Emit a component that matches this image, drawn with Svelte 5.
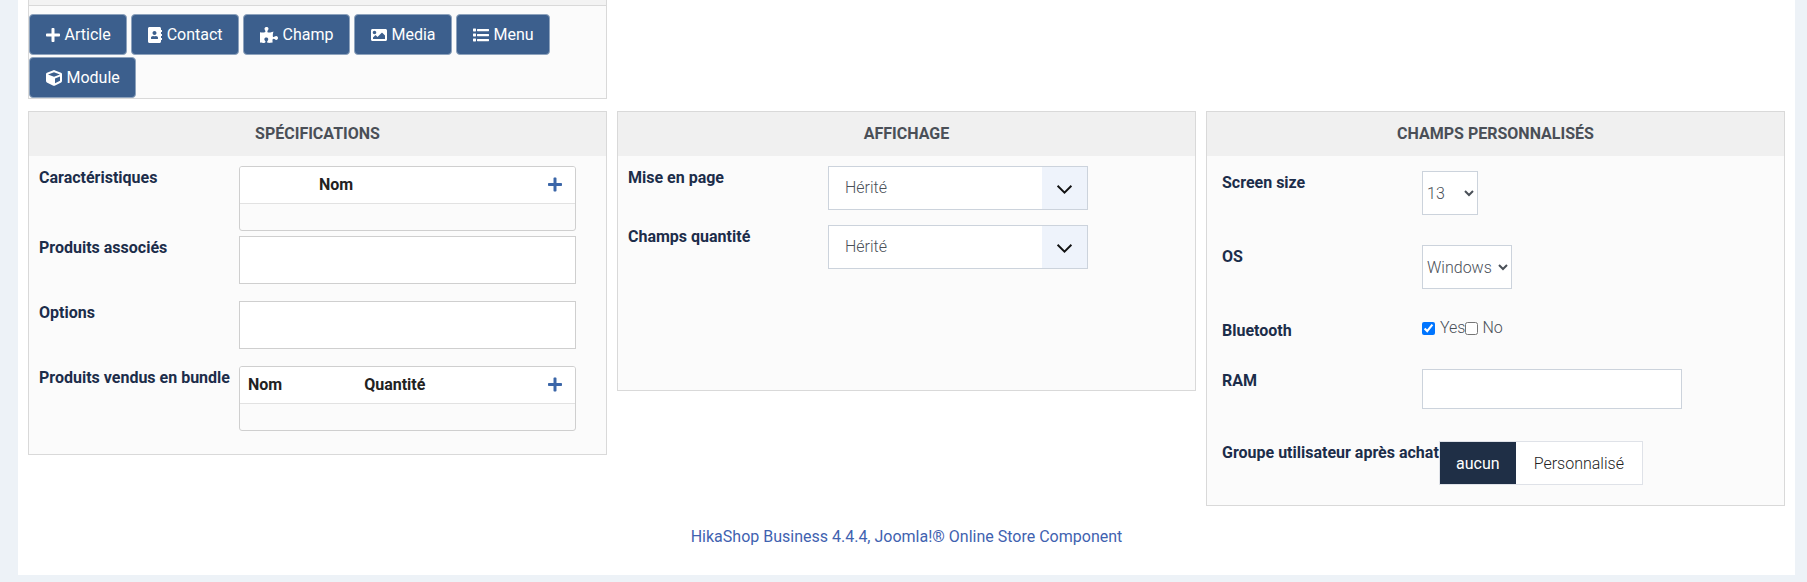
<script>
    // Boutons d'insertion du haut, icônes dessinées en SVG
    const boutons = [
        { nom: 'Article', vb: '0 0 448 512', d: 'M416 208H272V64c0-17.67-14.33-32-32-32h-32c-17.67 0-32 14.33-32 32v144H32c-17.67 0-32 14.33-32 32v32c0 17.67 14.33 32 32 32h144v144c0 17.67 14.33 32 32 32h32c17.67 0 32-14.33 32-32V304h144c17.67 0 32-14.33 32-32v-32c0-17.67-14.33-32-32-32z' },
        { nom: 'Contact', vb: '0 0 448 512', d: 'M436 160c6.6 0 12-5.4 12-12v-40c0-6.6-5.4-12-12-12h-20V48c0-26.5-21.5-48-48-48H48C21.5 0 0 21.5 0 48v416c0 26.5 21.5 48 48 48h320c26.5 0 48-21.5 48-48v-48h20c6.6 0 12-5.4 12-12v-40c0-6.6-5.4-12-12-12h-20v-64h20c6.6 0 12-5.4 12-12v-40c0-6.6-5.4-12-12-12h-20v-64h20zm-228-32c35.3 0 64 28.7 64 64s-28.7 64-64 64-64-28.7-64-64 28.7-64 64-64zm112 236.8c0 10.6-10 19.2-22.4 19.2H118.4C106 384 96 375.4 96 364.8v-19.2c0-31.8 30.1-57.6 67.2-57.6h5c12.3 5.1 25.7 8 39.8 8s27.6-2.9 39.8-8h5c37.1 0 67.2 25.8 67.2 57.6v19.2z' },
        { nom: 'Champ', vb: '0 0 576 512', d: 'M519.442 288.651c-41.519 0-59.5 31.593-82.058 31.593C377.409 320.244 432 144 432 144s-196.288 80-196.288-3.297c0-35.827 36.288-46.25 36.288-85.985C272 19.216 243.885 0 210.539 0c-34.654 0-66.366 18.891-66.366 56.346 0 41.364 31.711 59.277 31.711 81.75C175.885 207.719 0 166.758 0 166.758v333.237s178.635 41.047 178.635-28.662c0-22.473-40-40.107-40-81.471 0-37.456 29.25-56.346 63.577-56.346 33.673 0 61.788 19.216 61.788 54.717 0 39.735-36.288 50.158-36.288 85.985 0 60.803 129.675 25.73 181.23 25.73 0 0-34.725-120.101 25.827-120.101 35.962 0 46.423 36.152 86.308 36.152C556.712 416 576 387.99 576 354.443c0-34.199-18.962-65.792-56.558-65.792z' },
        { nom: 'Media', vb: '0 0 512 512', d: 'M464 448H48c-26.51 0-48-21.49-48-48V112c0-26.51 21.49-48 48-48h416c26.51 0 48 21.49 48 48v288c0 26.51-21.49 48-48 48zM112 120c-30.928 0-56 25.072-56 56s25.072 56 56 56 56-25.072 56-56-25.072-56-56-56zM64 384h384V272l-87.515-87.515c-4.686-4.686-12.284-4.686-16.971 0L208 320l-55.515-55.515c-4.686-4.686-12.284-4.686-16.971 0L64 336v48z' },
        { nom: 'Menu', vb: '0 0 512 512', d: 'M128 116V76c0-8.837 7.163-16 16-16h352c8.837 0 16 7.163 16 16v40c0 8.837-7.163 16-16 16H144c-8.837 0-16-7.163-16-16zm16 176h352c8.837 0 16-7.163 16-16v-40c0-8.837-7.163-16-16-16H144c-8.837 0-16 7.163-16 16v40c0 8.837 7.163 16 16 16zm0 160h352c8.837 0 16-7.163 16-16v-40c0-8.837-7.163-16-16-16H144c-8.837 0-16 7.163-16 16v40c0 8.837 7.163 16 16 16zM16 144h64c8.837 0 16-7.163 16-16V64c0-8.837-7.163-16-16-16H16C7.163 48 0 55.163 0 64v64c0 8.837 7.163 16 16 16zm0 160h64c8.837 0 16-7.163 16-16v-64c0-8.837-7.163-16-16-16H16c-8.837 0-16 7.163-16 16v64c0 8.837 7.163 16 16 16zm0 160h64c8.837 0 16-7.163 16-16v-64c0-8.837-7.163-16-16-16H16c-8.837 0-16 7.163-16 16v64c0 8.837 7.163 16 16 16z' },
        { nom: 'Module', vb: '0 0 512 512', d: 'M239.1 6.3l-208 78c-18.7 7-31.1 25-31.1 45v225.1c0 18.2 10.3 34.8 26.5 42.9l208 104c13.5 6.8 29.4 6.8 42.9 0l208-104c16.3-8.1 26.5-24.8 26.5-42.9V129.3c0-20-12.4-37.9-31.1-44.9l-208-78C262 2.2 250 2.2 239.1 6.3zM256 68.4l192 72v1.1l-192 78-192-78v-1.1l192-72zm32 356V275.5l160-65v133.9l-160 80z' }
    ];
    const plus = boutons[0];
    const affichage = ['Mise en page', 'Champs quantité'];
</script>

<div class="page">
    <div class="panel top">
        <div class="top-head"></div>
        <div class="actions">
            {#each boutons as b}
                <button type="button" class="btn">
                    <svg viewBox={b.vb} class="ico"><path d={b.d} /></svg>{b.nom}
                </button>
            {/each}
        </div>
    </div>

    <div class="panel spec">
        <h3>Spécifications</h3>
        <div class="row r1">
            <div class="lbl">Caractéristiques</div>
            <div class="tbl">
                <div class="tbl-head">
                    <span class="th-nom-seul">Nom</span>
                    <svg viewBox={plus.vb} class="add"><path d={plus.d} /></svg>
                </div>
                <div class="tbl-body"></div>
            </div>
        </div>
        <div class="row r2">
            <div class="lbl">Produits associés</div>
            <div class="box"></div>
        </div>
        <div class="row r2">
            <div class="lbl">Options</div>
            <div class="box"></div>
        </div>
        <div class="row">
            <div class="lbl">Produits vendus en bundle</div>
            <div class="tbl">
                <div class="tbl-head">
                    <span class="th-nom">Nom</span>
                    <span class="th-qte">Quantité</span>
                    <svg viewBox={plus.vb} class="add"><path d={plus.d} /></svg>
                </div>
                <div class="tbl-body"></div>
            </div>
        </div>
    </div>

    <div class="panel aff">
        <h3>Affichage</h3>
        {#each affichage as nom}
            <div class="row aff-row">
                <div class="lbl">{nom}</div>
                <div class="sel">
                    <span class="sel-val">Hérité</span>
                    <span class="sel-arrow">
                        <svg viewBox="0 0 16 10" width="17" height="11"><path d="M1.5 1.5 8 8l6.5-6.5" fill="none" stroke="#111" stroke-width="1.8" /></svg>
                    </span>
                </div>
            </div>
        {/each}
    </div>

    <div class="panel perso">
        <h3>Champs personnalisés</h3>
        <div class="row p-row">
            <div class="lbl">Screen size</div>
            <select class="native s13"><option>13</option></select>
        </div>
        <div class="row p-row">
            <div class="lbl">OS</div>
            <select class="native sos"><option>Windows</option></select>
        </div>
        <div class="row p-bt">
            <div class="lbl">Bluetooth</div>
            <div class="checks">
                <input type="checkbox" checked /><span class="chk-l">Yes</span><input type="checkbox" /><span class="chk-l last">No</span>
            </div>
        </div>
        <div class="row p-ram">
            <div class="lbl">RAM</div>
            <input type="text" class="ram" />
        </div>
        <div class="row">
            <div class="lbl grp">Groupe utilisateur après achat</div>
            <div class="toggle">
                <span class="on">aucun</span><span class="off">Personnalisé</span>
            </div>
        </div>
    </div>

    <div class="footer">HikaShop Business 4.4.4, Joomla!® Online Store Component</div>
</div>

<style>
    :global(body) {
        margin: 0;
        background: #edf2f7;
        font-family: Roboto, sans-serif;
    }

    .page {
        display: grid;
        grid-template-columns: repeat(3, 579px);
        column-gap: 10px;
        align-items: start;
        align-content: start;
        box-sizing: border-box;
        width: 1777px;
        height: 575px;
        margin-left: 18px;
        padding-left: 10px;
        background: #fff;
    }

    .panel {
        box-sizing: border-box;
        border: 1px solid #d9d9d9;
        background: #fbfbfb;
    }

    .top {
        grid-column: 1;
        height: 99px;
        border-top: 0;
        margin-bottom: 12px;
    }

    .spec {
        grid-column: 1;
        grid-row: 2;
        height: 344px;
    }

    .aff {
        grid-column: 2;
        grid-row: 2;
        height: 280px;
    }

    .perso {
        grid-column: 3;
        grid-row: 2;
        height: 395px;
    }

    .top-head {
        height: 5px;
        background: #f3f3f3;
        border-bottom: 1px solid #d9d9d9;
    }

    .actions {
        display: flex;
        flex-wrap: wrap;
        gap: 2px 4px;
        padding: 8px 0 0 0;
    }

    .btn {
        display: flex;
        align-items: center;
        height: 41px;
        padding: 0 15.5px;
        border: 1px solid #8ea3bd;
        border-radius: 4px;
        background: #3c5f8d;
        color: #fff;
        font: 400 16px Roboto, sans-serif;
    }

    .ico {
        height: 16px;
        width: auto;
        margin-right: 5px;
        fill: #fff;
    }

    h3 {
        margin: 0;
        height: 44px;
        line-height: 44px;
        text-align: center;
        background: #f0f0f0;
        color: #4a4f57;
        font-size: 16px;
        font-weight: 700;
        text-transform: uppercase;
    }

    .row {
        display: flex;
        align-items: flex-start;
    }

    .lbl {
        width: 200px;
        flex: none;
        color: #1c2d4a;
        font-size: 16px;
        font-weight: 700;
        line-height: 24px;
    }

    .spec .row {
        padding-left: 10px;
    }

    .r1 {
        margin-top: 10px;
        margin-bottom: 5px;
    }

    .r2 {
        margin-bottom: 17px;
    }

    .tbl {
        box-sizing: border-box;
        width: 337px;
        height: 65px;
        border: 1px solid #cfcfcf;
        border-radius: 3px;
        overflow: hidden;
    }

    .tbl-head {
        position: relative;
        height: 36px;
        line-height: 36px;
        background: #fff;
        border-bottom: 1px solid #e2e2e2;
        color: #222;
        font-size: 16px;
        font-weight: 700;
    }

    .th-nom-seul {
        margin-left: 79px;
    }

    .th-nom {
        margin-left: 8px;
    }

    .th-qte {
        margin-left: 78px;
    }

    .add {
        position: absolute;
        right: 13px;
        top: 9px;
        width: 14px;
        height: 17px;
        fill: #3b66a8;
    }

    .box {
        box-sizing: border-box;
        width: 337px;
        height: 48px;
        border: 1px solid #cfcfcf;
        background: #fff;
    }

    .aff-row {
        padding-left: 10px;
        margin-bottom: 15px;
    }

    h3 + .aff-row {
        margin-top: 10px;
    }

    .sel {
        box-sizing: border-box;
        display: flex;
        justify-content: space-between;
        width: 260px;
        height: 44px;
        border: 1px solid #ccd3dc;
        background: #fff;
        color: #4a5058;
        font-size: 16px;
        font-weight: 300;
    }

    .sel-val {
        padding-left: 16px;
        line-height: 42px;
    }

    .sel-arrow {
        display: flex;
        align-items: center;
        justify-content: center;
        width: 45px;
        padding-top: 3px;
        box-sizing: border-box;
        background: #eef3fb;
    }

    .perso .row {
        padding-left: 15px;
    }

    .p-row {
        margin-bottom: 30px;
    }

    h3 + .p-row {
        margin-top: 15px;
    }

    .native {
        box-sizing: border-box;
        height: 44px;
        padding: 0;
        border: 1px solid #ccd3dc;
        border-radius: 0;
        background: #fff;
        color: #4a5058;
        font: 300 16px Roboto, sans-serif;
    }

    .s13 {
        width: 56px;
    }

    .sos {
        width: 90px;
    }

    .p-bt {
        height: 50px;
    }

    .checks {
        display: flex;
        align-items: center;
        color: #4a5058;
        font-size: 16px;
        font-weight: 300;
        line-height: 18px;
    }

    .checks input {
        width: 13px;
        height: 13px;
        margin: 0;
    }

    .chk-l {
        margin-left: 5px;
    }

    .chk-l.last {
        margin-left: 4px;
    }

    .p-ram {
        margin-bottom: 32px;
    }

    .ram {
        box-sizing: border-box;
        width: 260px;
        height: 40px;
        border: 1px solid #ccd3dc;
        background: #fff;
    }

    .perso .grp {
        width: auto;
        white-space: nowrap;
    }

    .toggle {
        display: flex;
        box-sizing: border-box;
        height: 44px;
        border: 1px solid #dfe2e8;
        background: #fff;
        font-size: 16px;
        line-height: 44px;
    }

    .on {
        width: 76px;
        text-align: center;
        background: #1f2f46;
        color: #fff;
    }

    .off {
        width: 126px;
        text-align: center;
        color: #222;
        font-weight: 300;
    }

    .footer {
        grid-column: 1 / -1;
        margin-top: 21px;
        line-height: 20px;
        text-align: center;
        color: #3f62b0;
        font-size: 16px;
    }
</style>
